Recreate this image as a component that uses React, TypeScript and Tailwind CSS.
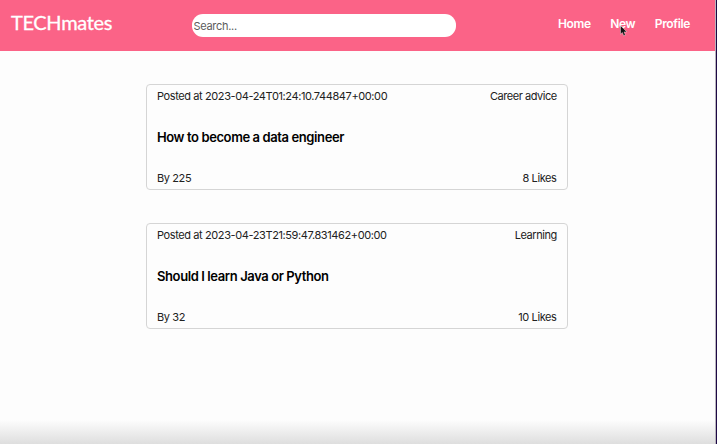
type Post = {
  postedAt: string;
  topic: string;
  title: string;
  author: string;
  likes: number;
};

const posts: Post[] = [
  {
    postedAt: "2023-04-24T01:24:10.744847+00:00",
    topic: "Career advice",
    title: "How to become a data engineer",
    author: "225",
    likes: 8,
  },
  {
    postedAt: "2023-04-23T21:59:47.831462+00:00",
    topic: "Learning",
    title: "Should I learn Java or Python",
    author: "32",
    likes: 10,
  },
];

function Header() {
  return (
    <header className="flex h-[51px] shrink-0 items-start bg-[#fb6387] text-white">
      <h1 className="ml-[11px] mt-[8px] w-[181px] font-['Lato',sans-serif] text-[20px] leading-7 tracking-[-0.35px] [-webkit-text-stroke:0.3px_white]">
        TECHmates
      </h1>
      <input
        type="text"
        placeholder="Search..."
        className="mt-[14px] h-[23px] w-[264px] rounded-[11px] bg-white pl-[1.5px] text-[11px] tracking-[-0.3px] text-black outline-none placeholder:text-[#5c5c5c]"
      />
      <nav className="ml-auto mr-[25px] mt-[14px] flex gap-[19.5px] text-[12px] font-semibold leading-5 tracking-[-0.35px]">
        <a>Home</a>
        <a className="relative">
          New
          <Pointer />
        </a>
        <a>Profile</a>
      </nav>
    </header>
  );
}

function Pointer() {
  return (
    <svg className="absolute left-[10px] top-[11px]" width="8" height="12" viewBox="0 0 8 12">
      <path
        d="M.5.6v8.6l1.9-1.7 1.3 3.3 1.7-.7-1.3-3.2h2.7z"
        fill="#111111"
        stroke="#ffffff"
        strokeWidth=".4"
      />
    </svg>
  );
}

function PostCard({ post }: { post: Post }) {
  return (
    <article className="flex h-[106px] w-[422px] flex-col rounded-[4px] border border-[#d5d5d5] px-[10px] pt-[3px] text-[11px] leading-[17px] tracking-[-0.4px] text-[#212121]">
      <div className="flex justify-between">
        <span>Posted at {post.postedAt}</span>
        <span className="mr-[0.2px] tracking-[-0.45px]">{post.topic}</span>
      </div>
      <h2 className="mb-[23px] mt-[22px] text-[13px] font-semibold leading-5 text-black">
        {post.title}
      </h2>
      <div className="flex justify-between">
        <span>By {post.author}</span>
        <span className="mr-[0.5px]">{post.likes} Likes</span>
      </div>
    </article>
  );
}

export default function App() {
  return (
    <div className="flex h-[444px] w-[717px] overflow-hidden bg-[#fdfdfd] font-['Inter',sans-serif]">
      <div className="flex flex-1 flex-col">
        <Header />
        <main className="ml-[146px] mt-[33px] flex flex-1 flex-col gap-[33px]">
          {posts.map((post) => (
            <PostCard key={post.postedAt} post={post} />
          ))}
        </main>
        <div className="h-6 bg-linear-to-b from-[#fdfdfd] to-[#dedede]" />
      </div>
      <div className="w-px bg-[#b8b4bc]" />
      <div className="w-px bg-[#1d0845]" />
    </div>
  );
}
